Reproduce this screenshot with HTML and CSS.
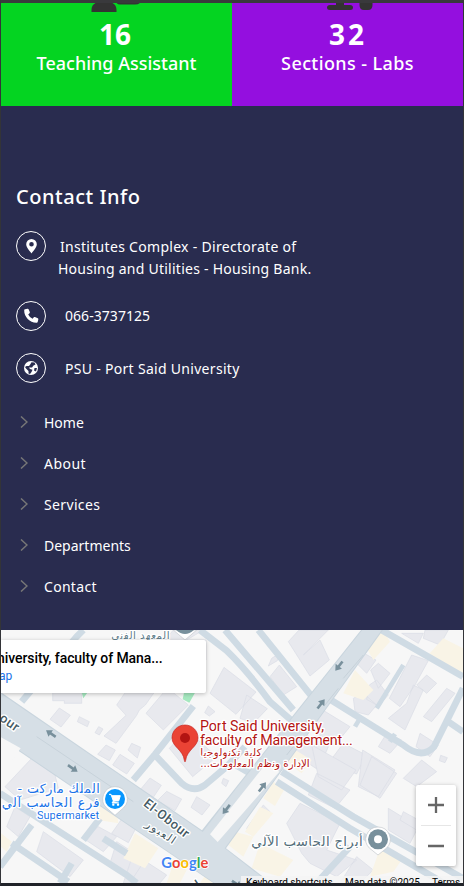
FILE: index.html
```html
<!DOCTYPE html>
<html lang="en">
<head>
<meta charset="utf-8">
<title>Contact Info</title>
<link rel="stylesheet" href="styles.css">
</head>
<body>
<div class="page">
  <section class="stats">
    <div class="stat stat-green">
      <svg class="stat-icon" viewBox="1 3 231 12"><path d="M91.500 12V10Q91.500 5 95.500 3H112.500Q116.500 5 116.500 10V12ZM116.500 3H140Q138 4.600 135 4.600H120Q118 4.600 116.500 3Z"/></svg>
      <strong class="n16">16</strong>
      <span class="label-ta">Teaching Assistant</span>
    </div>
    <div class="stat stat-purple">
      <svg class="stat-icon" viewBox="232 3 231 12"><path d="M336 3H344V5H350Q353 5 353 7.500Q353 10 350 10H330Q327 10 327 7.500Q327 5 330 5H336ZM359.500 3H372.500V5Q372.500 10 368 10H364Q359.500 10 359.500 5Z"/></svg>
      <strong class="n32">32</strong>
      <span class="label-sl">Sections - Labs</span>
    </div>
  </section>
  <section class="contact">
    <h2>Contact Info</h2>
    <div class="info">
      <span class="ring"><svg viewBox="0 0 30 30"><path fill-rule="evenodd" d="M15.500 8A5.300 5.300 0 0 0 10.200 13.300C10.200 16.500 14 20.500 15.500 22.500C17 20.500 20.800 16.500 20.800 13.300A5.300 5.300 0 0 0 15.500 8ZM15.500 11A2.300 2.300 0 1 1 15.500 15.600A2.300 2.300 0 1 1 15.500 11Z"/></svg></span>
      <p class="address"><span class="a1">Institutes Complex - Directorate of</span><br><span class="a2">Housing and Utilities - Housing Bank.</span></p>
    </div>
    <div class="info phone">
      <span class="ring"><svg viewBox="0 0 30 30"><path d="M9 8.300L11.500 7.700Q12.300 7.600 12.600 8.300L13.800 11.100Q14 11.800 13.500 12.300L12.200 13.400Q13.700 16.400 16.600 17.800L17.800 16.300Q18.300 15.800 18.900 16.100L21.800 17.300Q22.500 17.700 22.300 18.400L21.700 21Q21.500 21.800 20.700 21.800C14 22 8 16 8.200 9.300Q8.200 8.500 9 8.300Z"/></svg></span>
      <p class="a3">066-3737125</p>
    </div>
    <div class="info web">
      <span class="ring"><svg viewBox="0 0 30 30"><circle cx="15" cy="15" r="7"/><path class="ocean" d="M15.500 9.200L18.500 9.500L19.500 11.500L17.500 12.500L16 14.500L13 14.500L14 16L16.500 16.800L15.500 19L14 21L12.500 20.500L12.500 18L10 15.500L9 14L10.500 13L13 13L14.500 11ZM18.500 15L21 15L20 18.500L18 17.500Z"/></svg></span>
      <p class="a4">PSU - Port Said University</p>
    </div>
    <ul class="links">
      <li><svg viewBox="0 0 8 12"><path d="M1 .5L7 6L1 11.500"/></svg><span class="l1">Home</span></li>
      <li><svg viewBox="0 0 8 12"><path d="M1 .5L7 6L1 11.500"/></svg><span class="l2">About</span></li>
      <li><svg viewBox="0 0 8 12"><path d="M1 .5L7 6L1 11.500"/></svg><span class="l3">Services</span></li>
      <li><svg viewBox="0 0 8 12"><path d="M1 .5L7 6L1 11.500"/></svg><span class="l4">Departments</span></li>
      <li><svg viewBox="0 0 8 12"><path d="M1 .5L7 6L1 11.500"/></svg><span class="l5">Contact</span></li>
    </ul>
  </section>
  <section class="map">
    <svg class="canvas" viewBox="3 0 1386 759">
      <g class="green"><path d="M245 188H262L250 205ZM552 188H585L568 218L548 208Z"/></g>
      <g class="bld">
        <path d="M158 188H245V220H193V212H158ZM178 234L211 256L183 291L150 268ZM238 260L268 275L262 290L232 275ZM296 290L309 297L298 315L285 308ZM318 345L346 360L328 392L293 373ZM360 373L403 400L380 432L338 405ZM395 340L422 352L412 384L384 360Z"/>
        <path d="M375 188H462L436 225L418 240L410 256L348 340L312 318L378 256L350 225ZM490 188H520L565 225L490 300L438 250ZM470 60L520 0H610L560 30H618V90L600 110Z"/>
        <path d="M672 112L768 186L708 253L630 190ZM625 228L645 245L628 258L614 248ZM740 195L802 236L760 280L720 265ZM508 355L560 300L650 380L578 440ZM450 444L484 466L460 502L420 480ZM500 484L545 507L525 542L472 512ZM590 500L630 525L606 555L573 532ZM670 445L686 452L678 470L665 460Z"/>
        <path d="M897 0H985L910 75L960 30L988 90L930 138L865 35ZM838 105L890 170L850 195L810 140ZM815 85L838 70L832 92L805 108ZM960 235L1050 290L1005 345L920 290ZM890 300L985 350L955 420L865 360ZM985 400L1030 340L1098 375L1070 432Z"/>
        <path d="M1058 88L1075 60L1128 90L1100 130ZM1112 120L1135 100L1170 130L1135 175ZM1108 165L1130 150L1165 195L1135 228L1100 208ZM1060 205L1090 190L1130 225L1105 255L1065 245ZM1235 75L1285 92L1245 165L1200 230L1168 205ZM1240 165L1270 180L1215 300L1165 265L1220 220ZM1280 135L1310 160L1280 190L1250 165ZM1340 175L1365 190L1295 275L1270 260ZM1275 0H1345L1320 45L1270 25ZM1160 310L1205 330L1170 370L1135 350ZM1205 10H1270L1255 40Z"/>
        <path d="M935 345L1068 420L1025 480L955 440ZM950 430L1050 480L1005 535L925 495ZM1088 360L1185 420L1135 500L1075 470ZM1115 380L1190 430L1140 505L1080 465ZM1165 535L1255 590L1230 640L1165 600ZM1265 390L1310 425L1250 470L1210 445ZM1260 310L1315 345L1290 380L1248 350ZM1322 376L1342 383L1335 398L1318 392Z"/>
        <path d="M900 520L1020 580L980 660L1070 690L1010 740L930 700L905 670L860 580ZM1070 680L1120 720L1080 759H1020ZM790 525L810 545L765 610L740 595ZM1210 545L1265 575L1250 600L1200 570Z"/>
        <path d="M95 385L165 435L175 475L60 510L15 470ZM45 530L90 560L55 620L20 590ZM295 590L350 620L310 665L250 625ZM370 560L410 590L385 638L335 610ZM350 635L435 690L395 750L330 700ZM130 605L250 690L210 740L110 665ZM400 670L500 735L480 759H370Z"/>
      </g>
      <g class="sand"><path d="M1065 120L1120 180L1090 210L1030 190ZM1095 45L1150 0L1170 35L1120 90ZM1280 80L1330 25L1389 55V130L1330 105ZM870 350L935 390L905 430L850 390ZM820 455L852 480L825 528L790 505ZM780 530L820 550L760 620L735 605ZM705 605L760 620L730 680L685 645ZM780 640L880 690L840 740L755 715ZM1140 655L1205 690L1180 725L1110 740ZM300 505L350 535L355 580L295 570ZM405 610L475 655L435 715L370 685ZM3 610L35 635L20 665L3 650ZM520 700L560 720L540 759H500ZM620 730L660 759H600Z"/></g>
      <g class="road">
        <path class="thin" d="M65 215L230 20L250 0M400 450L465 373L580 228M465 375L545 460Q580 490 615 465L680 410L735 350M600 0L680 62Q740 120 810 215L890 285M675 0L880 240M775 0L940 205M1145 0L1389 140M985 205L1210 345Q1265 390 1302 350L1389 175M1345 275L1389 305M845 425L1060 560L1389 745M830 455L1050 595L1330 759M690 395L750 430M0 490L380 735L410 759M95 585L0 710M35 640L205 755M250 630L300 565M180 759L215 700M310 625L380 670M950 759L1050 650"/>
        <path class="lane" d="M1170 335L1185 312M1065 290L1080 265M1130 235L1210 105"/>
        <path class="main-edge" d="M0 185L606 601L706 474L1083 0H1149L840 430L678 655L814 759H640L0 325Z"/>
        <path class="main" d="M0 189L608 606L710 474L1087 0H1145L837 430L674 655L808 759H644L0 321Z"/>
        <path class="island" d="M630 613L800 398L838 425L653 636Z"/>
        <path class="line" d="M975 225L1015 175M1030 145L1090 75M860 375L900 325M110 320L400 515"/>
      </g>
      <path class="paper" d="M0 320L62 355L15 422L0 410Z"/>
      <g class="arrows">
        <path d="M-17 -4H1V-12L18 0L1 12V4H-17Z" transform="translate(153 311) rotate(214)"/>
        <path d="M-17 -4H1V-12L18 0L1 12V4H-17Z" transform="translate(218 415) rotate(34)"/>
        <path d="M-17 -4H1V-12L18 0L1 12V4H-17Z" transform="translate(1017 108) rotate(128)"/>
        <path d="M-17 -4H1V-12L18 0L1 12V4H-17Z" transform="translate(963 222) rotate(-52)"/>
        <path d="M-17 -4H1V-12L18 0L1 12V4H-17Z" transform="translate(787 471) rotate(-52)"/>
        <path d="M-17 -4H1V-12L18 0L1 12V4H-17Z" transform="translate(679 538) rotate(128)"/>
        <path d="M-17 -4H1V-12L18 0L1 12V4H-17Z" transform="translate(710 762) rotate(34)"/>
      </g>
      <g class="txt">
        <text class="road-name" transform="translate(0 273) rotate(35)" x="-5" y="0" textLength="62">our</text>
        <text class="road-name" transform="translate(428 525) rotate(38)" textLength="162">El-Obour</text>
        <text class="road-ar" transform="translate(476 615) rotate(34)" text-anchor="middle" textLength="100">العبور</text>
        <text class="road-name" transform="translate(578 792) rotate(-52)">ey</text>
        <text class="poi-ar" x="421" y="27" text-anchor="middle" textLength="175">المعهد الفني</text>
        <text class="poi-ar big" x="921" y="647" text-anchor="middle" textLength="334">أبراج الحاسب الآلي</text>
        <text class="shop-ar" x="176" y="488" text-anchor="middle" direction="rtl" textLength="247">الملك ماركت -</text>
        <text class="shop-ar" x="152" y="530" text-anchor="middle" textLength="294">فرع الحاسب آلي</text>
        <text class="shop-en" x="111" y="566" textLength="187">Supermarket</text>
        <text class="red" x="600" y="303" textLength="372">Port Said University,</text>
        <text class="red" x="600" y="345" textLength="458">faculty of Management...</text>
        <text class="red-ar" x="693" y="377" text-anchor="middle" textLength="184">كلية تكنولوجيا</text>
        <text class="red-ar" x="765" y="410" text-anchor="middle" direction="rtl" textLength="328">الإدارة ونظم المعلومات...</text>
      </g>
      <path class="pin" d="M555 285C533 285 516 302 516 324C516 350 550 360 553 391Q555 400 557 391C560 360 594 350 594 324C594 302 577 285 555 285Z"/>
      <circle cx="555" cy="324" r="15" fill="#b31412"/>
      <path class="poi-shadow" d="M345 470A37 37 0 0 0 320 534L345 556L370 534A37 37 0 0 0 345 470Z"/>
      <circle cx="345" cy="507" r="30" fill="#0796fe"/>
      <path d="M327 493H333L340 513H356L361 497H336M340 513L336 519H357" fill="#fff" stroke="#fff" stroke-width="3"/><circle cx="340" cy="524" r="3.500" fill="#fff"/><circle cx="354" cy="524" r="3.500" fill="#fff"/>
      <path class="poi-shadow" d="M1134 591A37 37 0 0 0 1109 655L1134 675L1159 655A37 37 0 0 0 1134 591Z"/>
      <circle cx="1134" cy="628" r="30" fill="#78909c"/><circle cx="1134" cy="628" r="12" fill="#fff"/>
      <path class="poi-shadow" d="M520 0L555 30L590 0Z"/><path d="M528 0Q555 24 582 0Z" fill="#78909c"/>
      <text class="google" x="484" y="714" textLength="141" lengthAdjust="spacingAndGlyphs"><tspan fill="#4285f4">G</tspan><tspan fill="#ea4335">o</tspan><tspan fill="#fbbc04">o</tspan><tspan fill="#4285f4">g</tspan><tspan fill="#34a853">l</tspan><tspan fill="#ea4335">e</tspan></text>
    </svg>
    <div class="place"><b>niversity, faculty of Mana...</b><span>ap</span></div>
    <div class="zoom"><svg viewBox="0 0 40 81"><path class="sep" d="M5 40.500H35"/><path d="M12 20H28M20 12V28M12 61H28"/></svg></div>
    <div class="terms"><span class="t1">Keyboard shortcuts</span><span class="t2">Map data ©2025</span><span class="t3">Terms</span></div>
  </section>
</div>
</body>
</html>
```
FILE: styles.css
```css
* { box-sizing: border-box; }
body { margin: 0; background: #333438; }
.page {
  width: 464px; height: 886px; overflow: hidden;
  border: 1px solid #333438; border-top: 3px solid #39393c; border-bottom: 3px solid #202329;
  font-family: "Noto Sans", sans-serif; color: #fff;
  display: flex; flex-direction: column;
}
.stats { display: grid; grid-template-columns: 1fr 1fr; height: 103px; flex: none; }
.stat { display: flex; flex-direction: column; align-items: center; }
.stat-green { background: #04d421; }
.stat-purple { background: #940fdf; }
.stat-icon { width: 231px; height: 12px; fill: #333; flex: none; }
.stat strong { font-size: 28px; line-height: 38px; font-weight: 700; }
.stat .n16 { margin-right: 3px; }
.stat .n32 { letter-spacing: 3px; margin-right: -1px; }
.stat span { font-size: 18px; line-height: 22px; font-weight: 500; white-space: nowrap; }
.stat .label-ta, .stat .label-sl { margin-top: -1px; }
.stat .label-sl { letter-spacing: .4px; }
.contact { height: 524px; flex: none; background: #292c4f; padding: 76px 15px 0; font-size: 14px; }
.contact h2 { margin: 0; font-size: 20px; line-height: 30px; font-weight: 500; letter-spacing: .52px; }
.info { display: flex; margin-top: 19px; height: 48px; }
.info p { margin: 1px 0 0; line-height: 30px; white-space: nowrap; }
.ring { width: 30px; height: 30px; border: 1px solid #fff; border-radius: 50%; flex: none; }
.ring svg { display: block; width: 30px; height: 30px; margin: -1px; fill: #fff; }
.ring .ocean { fill: #292c4f; }
.info .address { margin: 5px 0 0 12px; line-height: 22px; }
.a1 { margin-left: 2px; letter-spacing: .3px; }
.a2 { letter-spacing: .25px; }
.a3 { letter-spacing: .05px; }
.a4 { letter-spacing: .3px; }
.info.phone { margin-top: 22px; height: 30px; }
.info.web { margin-top: 22px; height: 30px; }
.phone p, .web p { padding-left: 19px; }
.phone p { margin-top: 0; }
.links { list-style: none; margin: 20px 0 0; padding: 0; }
.links li { display: flex; align-items: center; height: 41px; }
.links span { margin-top: -2px; }
.l2 { letter-spacing: .45px; }
.l3 { letter-spacing: .35px; }
.l5 { letter-spacing: .3px; }
.links svg { width: 8px; height: 12px; margin: -3px 16px 0 4px; fill: none; stroke: #777; stroke-width: 1.5; }
.map { position: relative; height: 253px; flex: none; overflow: hidden; background: #f7f7f7; font-family: Roboto, sans-serif; }
.canvas { display: block; width: 462px; height: 253px; }
.green { fill: #a5e8bf; }
.bld { fill: #e8e9ee; stroke: #d9dce5; stroke-width: 2; }
.sand { fill: #f9f4e6; }
.road path { fill: none; }
.road .thin, .road .lane { stroke: #cfdbe4; stroke-width: 20; stroke-linejoin: round; }
.road .lane { stroke-width: 14; }
.road .main-edge { fill: #c9d5de; }
.road .main { fill: #d6dfe6; }
.road .island, .paper { fill: #f7f7f7; }
.road .line { stroke: #c7d2da; stroke-width: 3; }
.arrows { fill: #78909c; }
.txt text { paint-order: stroke; stroke: #fff; stroke-width: 8; stroke-linejoin: round; }
.road-name { font: 500 39px Roboto, sans-serif; fill: #455a64; }
.road-ar { font: 33px "DejaVu Sans", sans-serif; fill: #455a64; }
.poi-ar { font: 31px "DejaVu Sans", sans-serif; fill: #607d8b; }
.txt .poi-ar.big { font-size: 40px; fill: #546e7a; }
.shop-ar { font: 38px "DejaVu Sans", sans-serif; fill: #1a73e8; }
.shop-en { font: 34px Roboto, sans-serif; fill: #1a73e8; }
.red { font: 43px Roboto, sans-serif; fill: #b31412; }
.red-ar { font: 31px "DejaVu Sans", sans-serif; fill: #b31412; }
.pin { fill: #ea4335; stroke: #c5221f; stroke-width: 2; }
.poi-shadow { fill: #fff; stroke: #c3c7cb; stroke-width: 2; }
.google { font: 500 44px Lato, sans-serif; font-weight: 700; stroke: #fff; stroke-width: 5; paint-order: stroke; }
.place { position: absolute; left: 0; top: 10px; width: 205px; height: 53px; background: #fff; box-shadow: 0 1px 4px rgba(0,0,0,.25); border-radius: 0 2px 2px 0; overflow: hidden; padding-top: 8px; }
.place b { display: block; font-size: 14px; line-height: 20px; font-weight: 500; color: #000; margin-left: -4px; white-space: nowrap; letter-spacing: -.08px; }
.place span { display: block; font-size: 12px; line-height: 16px; color: #1a73e8; margin-left: -2px; }
.zoom { position: absolute; left: 415px; top: 155px; width: 40px; height: 81px; background: #fff; border-radius: 2px; box-shadow: 0 1px 4px rgba(0,0,0,.3); }
.zoom svg { display: block; fill: none; stroke: #666; stroke-width: 2.3; }
.zoom .sep { stroke: #e6e6e6; stroke-width: 1; }
.terms { position: absolute; left: 240px; top: 246px; width: 222px; height: 14px; background: rgba(245,245,245,.85); color: #000; font-size: 10px; line-height: 13px; display: flex; white-space: nowrap; }
.t1 { margin-left: 5px; width: 99px; }
.t2 { width: 87px; }
```
